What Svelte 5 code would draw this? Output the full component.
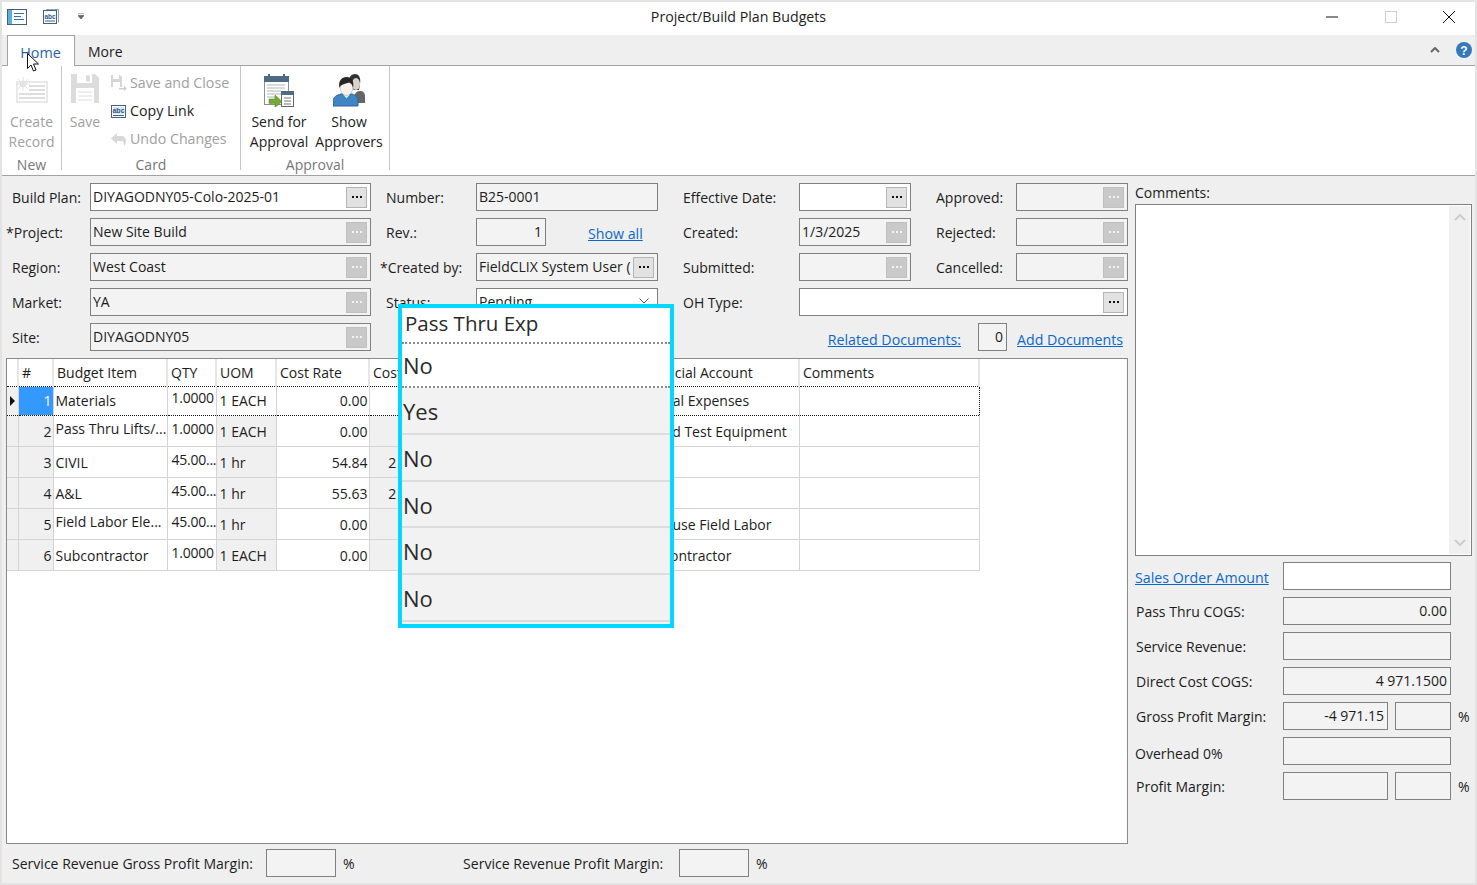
<script>
  const rows = [
    { n: 1, item: 'Materials', qty: '1.0000', uom: '1 EACH', rate: '0.00', cost: '', pass: 'No', acct: 'Special Expenses', wrapItem: false, on: true },
    { n: 2, item: 'Pass Thru Lifts/...', qty: '1.0000', uom: '1 EACH', rate: '0.00', cost: '', pass: 'Yes', acct: 'Issued Test Equipment', wrapItem: true },
    { n: 3, item: 'CIVIL', qty: '45.00...', uom: '1 hr', rate: '54.84', cost: '2 467.80', pass: 'No', acct: '', wrapItem: false },
    { n: 4, item: 'A&L', qty: '45.00...', uom: '1 hr', rate: '55.63', cost: '2 503.35', pass: 'No', acct: '', wrapItem: false },
    { n: 5, item: 'Field Labor Ele...', qty: '45.00...', uom: '1 hr', rate: '0.00', cost: '', pass: 'No', acct: 'In-house Field Labor', wrapItem: true },
    { n: 6, item: 'Subcontractor', qty: '1.0000', uom: '1 EACH', rate: '0.00', cost: '', pass: 'No', acct: 'Subcontractor', wrapItem: false }
  ];
  const heads = ['', '#', 'Budget Item', 'QTY', 'UOM', 'Cost Rate', 'Cost', 'Pass Thru Exp', 'Financial Account', 'Comments'];
  const zoomRows = ['No', 'Yes', 'No', 'No', 'No', 'No'];
</script>

{#snippet dots(disabled)}
  <span class="dots" class:off={disabled}><i></i><i></i><i></i></span>
{/snippet}

{#snippet abc()}
  <svg class="small" viewBox="0 0 16 16"><rect x="0.5" y="2.5" width="14" height="12" fill="#fff" stroke="#44627f"/><rect x="2" y="4" width="11" height="7" fill="#d9e6f2"/><text x="7.5" y="10" font-size="7" font-weight="700" text-anchor="middle" fill="#2c5a8a" font-family="Liberation Sans, sans-serif">abc</text><path d="M2 12.5h11" stroke="#44627f"/></svg>
{/snippet}

<div class="app">
  <header class="titlebar">
    <div class="quick">
      <svg class="q1" viewBox="0 0 20 16"><rect x="0.5" y="0.5" width="19" height="15" fill="#fff" stroke="#4a5f75"/><rect x="1" y="1" width="4" height="14" fill="#5ab0e0"/><path d="M7 4.5h10M7 7.5h7M7 10.5h10" stroke="#3b6fa0"/></svg>
      <svg class="q2" viewBox="0 0 16 16"><path d="M3 .5h12.500v13" fill="none" stroke="#8ea3b8"/><rect x="0.5" y="1.500" width="13" height="13" fill="#fff" stroke="#44627f"/><text x="7" y="9.500" font-size="6.500" font-weight="700" text-anchor="middle" fill="#2c5a8a" font-family="Liberation Sans, sans-serif">abc</text><path d="M2 12h10" stroke="#44627f"/></svg>
      <svg class="q3" viewBox="0 0 6 7"><path d="M0 0h6M0 2.500h6L3 6z" stroke="#777" stroke-width="1" fill="#666"/></svg>
    </div>
    <div class="title">Project/Build Plan Budgets</div>
    <div class="winctl">
      <svg viewBox="0 0 12 12"><path d="M0 6h12" stroke="#111" stroke-width="1"/></svg>
      <svg viewBox="0 0 12 12"><rect x="0.500" y="0.500" width="11" height="11" fill="none" stroke="#cfcfcf"/></svg>
      <svg viewBox="0 0 12 12"><path d="M0 0l12 12M12 0L0 12" stroke="#111" stroke-width="1"/></svg>
    </div>
  </header>

  <nav class="tabs">
    <div class="tab active">Home</div>
    <div class="tab">More</div>
    <div class="tab-right">
      <svg class="caret" viewBox="0 0 10 6"><path d="M1 5l4-4 4 4" fill="none" stroke="#666" stroke-width="2"/></svg>
      <svg class="help" viewBox="0 0 16 16"><circle cx="8" cy="8" r="8" fill="#3579bd"/><text x="8" y="12.500" font-size="12" font-weight="700" text-anchor="middle" fill="#fff" font-family="Liberation Sans, sans-serif">?</text></svg>
    </div>
  </nav>

  <section class="ribbon">
    <div class="group g-new">
      <div class="group-body">
        <div class="big off">
          <svg class="big-icon create" viewBox="0 0 32 26"><rect x="1" y="5" width="30" height="20" fill="#fff" stroke="#e2e2e2" stroke-width="1.500"/><path d="M13 9h16M13 13h16M3 17h26M3 21h26" stroke="#dedede" stroke-width="2"/><circle cx="7" cy="7" r="3.500" fill="#e4e4e4"/><path d="M7 0v14M0 7h14M2 2l10 10M12 2L2 12" stroke="#e4e4e4"/></svg>
          <span>Create<br />Record</span>
        </div>
      </div>
      <div class="group-label">New</div>
    </div>
    <div class="group g-card">
      <div class="group-body">
        <div class="big off save">
          <svg class="big-icon floppy" viewBox="0 0 28 29"><path d="M0 0h24l4 4v25H0z" fill="#dcdcdc"/><rect x="6" y="0" width="15" height="9" fill="#fff"/><rect x="15" y="1.500" width="4" height="6" fill="#dcdcdc"/><rect x="5" y="14" width="18" height="15" fill="#fff"/><path d="M7 18h14M7 22h14M7 26h14" stroke="#dcdcdc"/></svg>
          <span>Save<br />&nbsp;</span>
        </div>
        <div class="small-col">
          <div class="small-btn off">
            <svg class="small" viewBox="0 0 16 16"><path d="M0 0h9l2 2v10H0z" fill="#d6d6d6"/><rect x="2" y="0" width="6" height="4" fill="#fff"/><rect x="2" y="7" width="7" height="5" fill="#fff"/><path d="M8 13h5V11l3 2.500L13 16v-1.500H8z" fill="#cfcfcf"/></svg>
            <span>Save and Close</span>
          </div>
          <div class="small-btn">{@render abc()}<span>Copy Link</span></div>
          <div class="small-btn off">
            <svg class="small" viewBox="0 0 16 16"><path d="M6 2v3h4c3 0 5 2 5 5 0 2-1 4-2 5 .5-3-1-5-3-5H6v3L0 7.500z" fill="#d8d8d8"/></svg>
            <span>Undo Changes</span>
          </div>
        </div>
      </div>
      <div class="group-label">Card</div>
    </div>
    <div class="group g-appr">
      <div class="group-body">
        <div class="big send">
          <svg class="big-icon sendi" viewBox="0 0 30 33"><rect x="0.500" y="2.500" width="24" height="28" fill="#fff" stroke="#8a8f96"/><rect x="0" y="2" width="25" height="6" fill="#4e6a85"/><path d="M5 0v4M20 0v4" stroke="#4e6a85" stroke-width="2"/><path d="M3 11h18M3 14h18M3 17h14M3 20h14M3 23h10" stroke="#b0b4b8"/><rect x="17.500" y="17.500" width="12" height="15" fill="#fff" stroke="#666"/><rect x="17" y="17" width="13" height="4" fill="#4e6a85"/><path d="M20 24h7M20 27h7M20 30h7" stroke="#777"/><path d="M5 25h6v-4l7 6.500-7 6v-4H5z" fill="#77a83a" stroke="#55801f" stroke-width=".5"/></svg>
          <span>Send for<br />Approval</span>
        </div>
        <div class="big show">
          <svg class="big-icon people" viewBox="0 0 33 33"><path d="M22 29V21c0-3 3-4 5-4 3 0 5 2 5 5v7z" fill="#666"/><path d="M15 10c0-6 3-10 7-10s6 4 5 10l-1 6h-5z" fill="#333"/><ellipse cx="23" cy="10" rx="4" ry="6" fill="#d9d2ca"/><path d="M0 32v-5c0-4 4-6 8-7h11c4 1 6 3 6 7v5z" fill="#3f85c6" stroke="#2c6399"/><path d="M9 20l4.500 5 4.500-5z" fill="#d8e8f4" stroke="#2c6399" stroke-width=".7"/><ellipse cx="13.500" cy="13" rx="6.500" ry="8.500" fill="#f6f1ea" stroke="#aaa" stroke-width=".5"/><path d="M6.500 14c-1.500-7 2-11 7-11s8 4 6.500 11c-.5-3-2-5-4-5.500-3 1.500-8 1-9.500 5.500z" fill="#262626"/></svg>
          <span>Show<br />Approvers</span>
        </div>
      </div>
      <div class="group-label">Approval</div>
    </div>
  </section>

  <main class="work">
    <div class="left">
      <div class="form">
        <label class="lab">Build Plan:</label>
        <div class="f w"><span>DIYAGODNY05-Colo-2025-01</span>{@render dots(false)}</div>
        <label class="lab mid">Number:</label>
        <div class="f"><span>B25-0001</span></div>
        <label class="lab far">Effective Date:</label>
        <div class="f w">{@render dots(false)}</div>
        <label class="lab far">Approved:</label>
        <div class="f">{@render dots(true)}</div>

        <label class="lab star">*Project:</label>
        <div class="f"><span>New Site Build</span>{@render dots(true)}</div>
        <label class="lab mid">Rev.:</label>
        <div class="rev"><div class="f rev-f"><span class="num">1</span></div><a class="link show-all" href="#all">Show all</a></div>
        <label class="lab far">Created:</label>
        <div class="f"><span>1/3/2025</span>{@render dots(true)}</div>
        <label class="lab far">Rejected:</label>
        <div class="f">{@render dots(true)}</div>

        <label class="lab">Region:</label>
        <div class="f"><span>West Coast</span>{@render dots(true)}</div>
        <label class="lab mid star2">*Created by:</label>
        <div class="f"><span>FieldCLIX System User (</span>{@render dots(false)}</div>
        <label class="lab far">Submitted:</label>
        <div class="f">{@render dots(true)}</div>
        <label class="lab far">Cancelled:</label>
        <div class="f">{@render dots(true)}</div>

        <label class="lab">Market:</label>
        <div class="f"><span>YA</span>{@render dots(true)}</div>
        <label class="lab mid">Status:</label>
        <div class="f w"><span>Pending</span><svg class="chev" viewBox="0 0 10 6"><path d="M.5.5L5 5 9.500.5" fill="none" stroke="#555"/></svg></div>
        <label class="lab far">OH Type:</label>
        <div class="f w span3">{@render dots(false)}</div>

        <label class="lab">Site:</label>
        <div class="f"><span>DIYAGODNY05</span>{@render dots(true)}</div>
        <div class="docs">
          <a class="link" href="#rel">Related Documents:</a>
          <div class="f doc-count"><span class="num">0</span></div>
          <a class="link" href="#add">Add Documents</a>
        </div>
      </div>

      <div class="grid">
        <table>
          <thead>
            <tr>
              {#each heads as h, i}<th class="c{i}">{h}</th>{/each}
            </tr>
          </thead>
          <tbody>
            {#each rows as r}
              <tr class:on={r.on}>
                <td class="rh">{#if r.on}<svg viewBox="0 0 5 10"><path d="M0 0l5 5-5 5z" fill="#111"/></svg>{/if}</td>
                <td class="no ro">{r.n}</td>
                <td class="item"><span class:up={r.wrapItem}>{r.item}</span></td>
                <td class="qty"><span class="up">{r.qty}</span></td>
                <td class="uom ro">{r.uom}</td>
                <td class="rate">{r.rate}</td>
                <td class="cost ro">{r.cost}</td>
                <td class="pass">{r.pass}</td>
                <td class="acct">{r.acct}</td>
                <td class="cm"></td>
              </tr>
            {/each}
          </tbody>
        </table>
      </div>

      <div class="foot">
        <span class="foot-l1">Service Revenue Gross Profit Margin:</span>
        <div class="f foot-f"></div>
        <span class="pct1">%</span>
        <span class="foot-l2">Service Revenue Profit Margin:</span>
        <div class="f foot-f"></div>
        <span class="pct1">%</span>
      </div>
    </div>

    <aside class="right">
      <div class="cm-label">Comments:</div>
      <div class="cm-box">
        <div class="sb">
          <svg viewBox="0 0 12 7"><path d="M1 6l5-5 5 5" fill="none" stroke="#cdcdcd" stroke-width="2"/></svg>
          <svg viewBox="0 0 12 7"><path d="M1 1l5 5 5-5" fill="none" stroke="#cdcdcd" stroke-width="2"/></svg>
        </div>
      </div>
      <div class="sum">
        <a class="link sum-l sales" href="#so">Sales Order Amount</a>
        <div class="f w wide"></div>

        <span class="sum-l in">Pass Thru COGS:</span>
        <div class="f wide"><span class="num">0.00</span></div>

        <span class="sum-l in">Service Revenue:</span>
        <div class="f wide"></div>

        <span class="sum-l in">Direct Cost COGS:</span>
        <div class="f wide"><span class="num">4 971.1500</span></div>

        <span class="sum-l in">Gross Profit Margin:</span>
        <div class="pair"><div class="f a"><span class="num">-4 971.15</span></div><div class="f b"></div><span class="pct">%</span></div>

        <span class="sum-l over">Overhead 0%</span>
        <div class="f wide"></div>

        <span class="sum-l in">Profit Margin:</span>
        <div class="pair"><div class="f a"></div><div class="f b"></div><span class="pct">%</span></div>
      </div>
    </aside>
  </main>

  <div class="zoom">
    <div class="z-head">Pass Thru Exp</div>
    <div class="z-row first">{zoomRows[0]}</div>
    {#each zoomRows.slice(1) as z}
      <div class="z-row">{z}</div>
    {/each}
  </div>

  <svg class="cursor" viewBox="0 0 12 19"><path d="M.5.5v15l3.500-3.500 2.500 6 2.500-1-2.500-6h5z" fill="#fff" stroke="#111" stroke-linejoin="round"/></svg>
</div>

<style>
  :global(body) { margin: 0; background: #e3e3e3; }
  .app {
    position: relative;
    box-sizing: border-box;
    width: 1477px;
    height: 885px;
    display: flex;
    flex-direction: column;
    overflow: hidden;
    border: 2px solid #e3e3e3;
    background: #efefef;
    font-family: "Open Sans", "Noto Sans", sans-serif;
    font-size: 14px;
    color: #1c1c1c;
  }
  .titlebar {
    height: 33px;
    flex: none;
    box-sizing: border-box;
    padding-bottom: 4px;
    background: #fff;
    display: grid;
    grid-template-columns: 1fr auto 1fr;
    align-items: center;
  }
  .quick { display: flex; align-items: center; padding-left: 5px; }
  .q1 { width: 20px; height: 16px; }
  .q2 { width: 16px; height: 16px; margin-left: 16px; }
  .q3 { width: 6px; height: 7px; margin-left: 19px; }
  .title { font-size: 14.2px; margin-bottom: 1px; }
  .winctl { display: flex; justify-content: flex-end; padding-right: 20px; gap: 46.5px; }
  .winctl svg { width: 12px; height: 12px; }

  .tabs {
    height: 31px;
    flex: none;
    box-sizing: border-box;
    display: flex;
    align-items: flex-end;
    border-bottom: 1px solid #a3a3a3;
    padding-left: 5px;
  }
  .tab { height: 30px; box-sizing: border-box; padding: 7px 13px 0; line-height: 20px; font-size: 14px; }
  .tab.active {
    width: 68px;
    height: 31px;
    margin-bottom: -1px;
    padding: 7px 1px 0 0;
    text-align: center;
    background: #fff;
    border: 1px solid #a3a3a3;
    border-bottom: none;
    color: #2a5fa8;
    font-size: 14.4px;
  }
  .tab-right { margin-left: auto; display: flex; align-items: center; gap: 16px; padding: 0 3px 7px 0; }
  .caret { width: 10px; height: 6px; }
  .help { width: 16px; height: 16px; }

  .ribbon {
    height: 110px;
    flex: none;
    box-sizing: border-box;
    background: #fff;
    border-bottom: 1px solid #a3a3a3;
    display: flex;
    padding-bottom: 5px;
  }
  .group { box-sizing: border-box; display: flex; flex-direction: column; border-right: 1px solid #c6c6c6; }
  .g-new { width: 60px; }
  .g-card { width: 179px; }
  .g-appr { width: 149px; }
  .group-body { flex: 1; display: flex; min-height: 0; }
  .group-label { height: 18px; line-height: 18px; text-align: center; color: #777; font-size: 14px; margin-bottom: -4px; position: relative; top: 0; }
  .big { display: flex; flex-direction: column; align-items: center; text-align: center; line-height: 20px; font-size: 14px; }
  .big span { margin-top: auto; margin-bottom: 4px; height: 40px; }
  .big.off { color: #a0a0a0; }
  .g-new .big { width: 59px; }
  .big-icon { display: block; margin-top: 8px; }
  .create { width: 32px; height: 26px; margin-top: 11px; }
  .floppy { width: 28px; height: 29px; }
  .sendi { width: 30px; height: 33px; }
  .people { width: 33px; height: 33px; }
  .save { width: 46px; }
  .send { width: 70px; }
  .show { width: 70px; }
  .g-appr .group-body { padding-left: 3px; }
  .small-col { display: flex; flex-direction: column; padding: 3px 0 0 3px; }
  .small-btn { height: 28px; display: flex; align-items: center; gap: 3px; font-size: 14.2px; padding-bottom: 1px; box-sizing: border-box; }
  .small-btn.off { color: #a0a0a0; }
  .small { width: 16px; height: 16px; flex: none; }

  .work { flex: 1; min-height: 0; display: flex; padding: 7px 4px 6px 4px; gap: 7px; }
  .left { width: 1122px; flex: none; display: flex; flex-direction: column; }
  .form {
    display: grid;
    grid-template-columns: 84px 281px 105px 182px 141px 112px 105px 112px;
    grid-auto-rows: 28px;
    row-gap: 7px;
  }
  .lab { display: flex; align-items: center; padding: 0 0 0 6px; white-space: nowrap; font-size: 14px; }
  .lab.star { padding-left: 0; }
  .lab.mid { padding-left: 15px; }
  .lab.star2 { padding-left: 9px; }
  .lab.far { padding-left: 25px; }

  .f {
    box-sizing: border-box;
    height: 28px;
    border: 1px solid #808080;
    background: #f3f3f3;
    display: flex;
    align-items: center;
    padding: 0 3px 2px 2px;
    overflow: hidden;
    white-space: nowrap;
    font-size: 14px;
  }
  .f.w { background: #fff; }
  .f > span:not(.dots) { flex: 1; min-width: 0; overflow: hidden; }
  .num { text-align: right; }
  .span3 { grid-column: span 3; }
  .dots {
    box-sizing: border-box;
    flex: none;
    width: 21px;
    height: 21px;
    margin: 2px 0 0 auto;
    border: 1px solid #b5b5b5;
    background: #e2e2e2;
    display: flex;
    align-items: center;
    justify-content: center;
    gap: 2px;
    padding-bottom: 1px;
  }
  .dots i { width: 2px; height: 2px; background: #111; }
  .dots.off { background: #c9c9c9; border-color: #c0c0c0; }
  .dots.off i { background: #f2f2f2; }
  .chev { width: 10px; height: 6px; margin: 0 5px 0 auto; flex: none; }
  .rev { display: flex; align-items: center; }
  .rev-f { width: 70px; flex: none; }
  .show-all { margin-left: 42px; padding-top: 2px; }
  .link { color: #0a68d0; text-decoration: underline; white-space: nowrap; font-size: 14.2px; }
  .docs { grid-column: 3 / -1; display: flex; justify-content: flex-end; align-items: center; padding-right: 5px; }
  .docs .link { padding-top: 5px; }
  .doc-count { width: 29px; margin: 0 10px 0 17px; }

  .grid { flex: 1; min-height: 0; margin-top: 7px; border: 1px solid #8a8a8a; background: #fff; overflow: hidden; }
  table { border-collapse: collapse; table-layout: fixed; width: 972px; font-size: 14px; }
  th { height: 27px; padding: 0 0 0 3px; font-weight: 400; text-align: left; box-sizing: border-box; border-right: 2px solid #e6e6e6; white-space: nowrap; overflow: hidden; }
  .c0 { width: 11px; padding: 0; }
  .c1 { width: 35px; }
  .c2 { width: 114px; }
  .c3 { width: 49px; }
  .c4 { width: 60px; }
  .c5 { width: 93px; }
  .c6 { width: 79px; }
  .c7 { width: 187px; }
  .c8 { width: 164px; }
  .c9 { width: 180px; }
  td { height: 31px; box-sizing: border-box; padding: 2px 3px 0; border: 1px solid #d4d4d4; border-top: none; border-left: none; white-space: nowrap; overflow: hidden; }
  tr.on td { height: 29px; padding-top: 0; border-top: 1px dotted #111; border-bottom: 1px dotted #111; }
  tr.on td.cm { border-right: 1px dotted #111; }
  td.rh { background: #f0f0f0; padding: 0 0 0 3px; }
  .rh svg { display: block; width: 5px; height: 10px; }
  .ro { background: #f0f0f0; }
  tr.on .ro { background: #fff; }
  td.no { text-align: right; padding-right: 1px; }
  tr.on td.no { background: #3399ff; color: #fff; }
  .rate, .cost { text-align: right; }
  td.rate { padding-right: 1px; }
  td.cost { padding-right: 4px; }
  td.item { padding-left: 2px; }
  .up { display: block; margin-top: -7px; }
  td.qty { padding-left: 3px; padding-right: 0; }
  .qty .up { margin-top: -6px; margin-left: 1px; letter-spacing: -.25px; }

  .foot { height: 28px; flex: none; margin-top: 5px; display: flex; align-items: center; padding-left: 6px; font-size: 14px; }
  .foot-f { width: 70px; flex: none; }
  .foot-l1 { width: 254px; flex: none; white-space: nowrap; font-size: 14.05px; }
  .foot-l2 { width: 216px; flex: none; white-space: nowrap; font-size: 14.1px; }
  .pct1 { width: 127px; flex: none; padding: 0 0 0 7px; box-sizing: border-box; }
  .pct1:last-child { width: auto; }

  .right { width: 337px; flex: none; display: flex; flex-direction: column; }
  .cm-label { height: 21px; line-height: 20px; font-size: 14px; }
  .cm-box { box-sizing: border-box; height: 352px; flex: none; border: 1px solid #808080; background: #fff; display: flex; justify-content: flex-end; padding: 1px; }
  .sb { width: 21px; background: #f0f0f0; display: flex; flex-direction: column; justify-content: space-between; align-items: center; padding: 8px 0; box-sizing: border-box; }
  .sb svg { width: 12px; height: 7px; }
  .sum {
    margin-top: 6px;
    display: grid;
    grid-template-columns: 148px 189px;
    grid-auto-rows: 28px;
    row-gap: 7px;
    align-items: center;
  }
  .sum-l { white-space: nowrap; font-size: 14px; }
  .sales { font-size: 14.2px; padding-top: 2px; }
  .sum-l.in { padding-left: 1px; }
  .sum-l.over { padding-top: 4px; }
  .wide { width: 168px; }
  .pair { display: flex; align-items: center; gap: 7px; }
  .pair .a { width: 105px; }
  .pair .b { width: 56px; }

  .zoom {
    position: absolute;
    left: 396px;
    top: 302px;
    box-sizing: border-box;
    width: 276px;
    height: 324px;
    border: 4px solid #00d9ff;
    background: #f2f2f2;
    font-size: 22px;
    color: #2a2a2a;
  }
  .z-head { box-sizing: border-box; height: 36px; background: #fff; border-bottom: 2px dotted #8a8a8a; padding-left: 3px; line-height: 30px; font-size: 20.5px; }
  .z-row { box-sizing: border-box; height: 46.8px; border-bottom: 2px solid #dcdcdc; padding-left: 1px; line-height: 46px; }
  .z-row.first { height: 44px; background: #fff; border-bottom: 2px dotted #8a8a8a; line-height: 43px; }
  .cursor { position: absolute; left: 25px; top: 51px; width: 12px; height: 19px; }
</style>
